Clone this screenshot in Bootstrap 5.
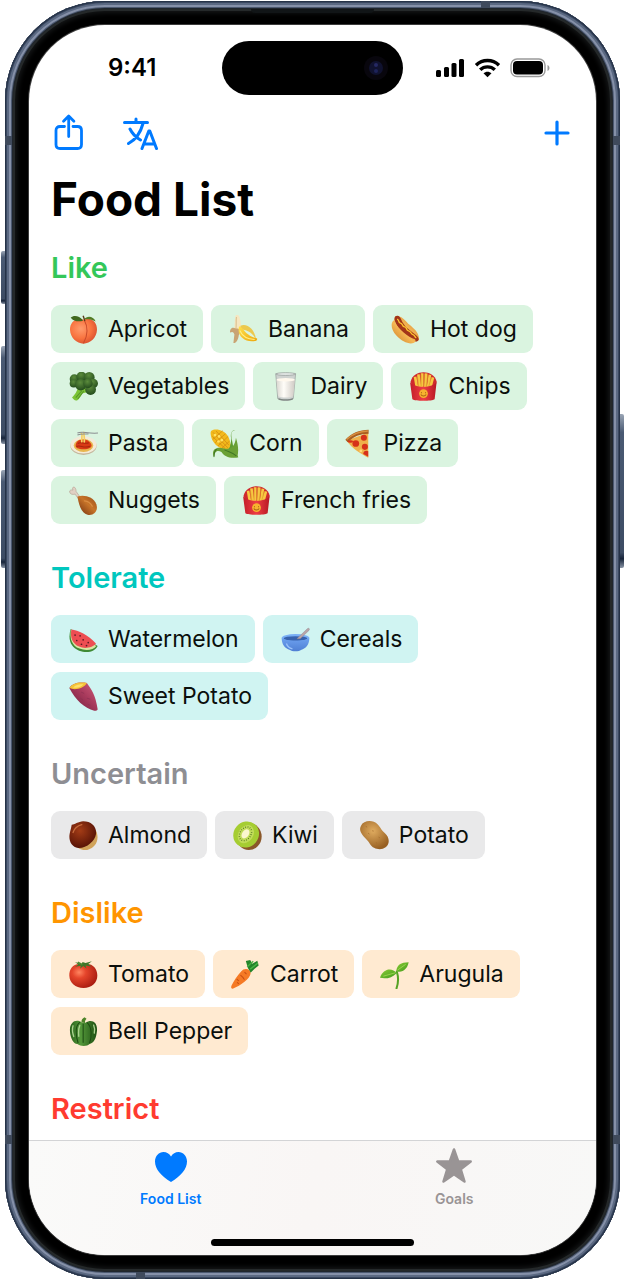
<!DOCTYPE html>
<html lang="en">
<head>
<meta charset="utf-8">
<meta name="viewport" content="width=device-width, initial-scale=1">
<title>Food List</title>
<link rel="stylesheet" href="https://cdn.jsdelivr.net/npm/bootstrap@5.3.0/dist/css/bootstrap.min.css">
<script src="https://cdn.jsdelivr.net/npm/bootstrap@5.3.0/dist/js/bootstrap.bundle.min.js"></script>
<style>
  body { font-family: Inter, "Liberation Sans", sans-serif; background: #fff; color: #000; }
  .stage { padding: 1px 5px; }
  .phone {
    padding: 24px; border-radius: 100px; background: #000;
    box-shadow: inset 0 0 0 1px #253247, inset 0 0 0 2px #3a4860, inset 0 0 0 4px #5b6982,
      inset 0 0 0 6px #8590a8, inset 0 0 0 7px #4b586f, inset 0 0 0 8px #20262d,
      inset 0 0 0 10px #25292a, inset 0 0 5px 12px #151718;
  }
  .screen { border-radius: 76px; background: #fff; box-shadow: 0 0 0 1px #3c3c3c; }
  .side-key { width: 4px; background: linear-gradient(#9aa5b5, #4a5a73 12%, #3d4c64 90%, #17243a 94%, #8a95a6); border-radius: 2px 0 0 2px; }
  .side-key.right { border-radius: 0 2px 2px 0; right: -4px; }
  .side-key.left { left: -4px; }
  .key-action { top: 250px; height: 53px; }
  .key-up { top: 345px; height: 98px; }
  .key-down { top: 469px; height: 98px; }
  .key-power { top: 413px; height: 154px; }
  .band { background: #3f4a5c; }
  .band-side { width: 7px; height: 9px; }
  .band-edge { width: 9px; height: 7px; }
  .band-upper { top: 135px; }
  .band-lower { bottom: 135px; }
  .band-left { left: 0; }
  .band-right { right: 0; }
  .band-top { top: 0; right: 130px; }
  .band-bottom { bottom: 0; left: 131px; }
  .earpiece { top: 8px; left: 40%; right: 40%; height: 4px; background: #111517; border-radius: 0 0 4px 4px; }

  .status { padding: 16px 46px 0 79px; }
  .status time { font-size: 24px; line-height: 54px; font-weight: 600; }
  .island { width: 181px; height: 54px; border-radius: 27px; background: #000; left: 50%; margin-left: -91px; padding-right: 14px; }
  .tools { padding: 17px 25px 0 24px; height: 59px; }
  .tools button { color: #007aff; line-height: 0; }
  .tools button + button { margin-left: 36px; }
  .content { padding: 0 22px 13px; }
  h1 { font-size: 46px; line-height: 60px; font-weight: 700; margin: 15px 0 21px; }
  section + section { margin-top: 36px; }
  h2 { font-size: 29px; line-height: 36px; font-weight: 600; margin: 0 0 19px; }
  .chips { gap: 9px 8px; }
  .chip { height: 48px; padding: 0 16px 0 18px; gap: 10px; border: 0; border-radius: 9px; font-size: 23px; line-height: 28px; color: #0b0f0c; background: var(--tint); }
  .chip svg { width: 29px; height: 29px; }
  .like { --tint: #daf4e0; } .like h2 { color: #34c759; }
  .tolerate { --tint: #d0f4f2; } .tolerate h2 { color: #00c7be; }
  .uncertain { --tint: #e9e9ea; } .uncertain h2 { color: #8e8e93; }
  .dislike { --tint: #ffead1; } .dislike h2 { color: #ff9500; }
  .restrict h2 { color: #ff3b30; }
  .tabs { border-top: 1px solid #d3d4d6; background: linear-gradient(100deg, #fafaf9, #f9f6f5 50%, #f8f8f7); }
  .tabs a { padding-top: 5px; font-size: 14px; line-height: 18px; font-weight: 600; color: #999495; }
  .tabs a.active { color: #007aff; }
  .tabs svg { margin-bottom: 2px; }
  .home-bar { width: 203px; height: 7px; border-radius: 4px; background: #000; margin: 31px auto 9px; }
</style>
</head>
<body>

<svg width="0" height="0" class="position-absolute" aria-hidden="true">
  <defs>
    <radialGradient id="gPeach" cx=".4" cy=".4" r=".65"><stop offset="0" stop-color="#ff9c6d"/><stop offset=".6" stop-color="#f8733f"/><stop offset="1" stop-color="#d9502f"/></radialGradient>
    <radialGradient id="gBroc" cx=".45" cy=".3" r=".7"><stop offset="0" stop-color="#5b8b3c"/><stop offset="1" stop-color="#234c1c"/></radialGradient>
    <linearGradient id="gMilk"><stop offset="0" stop-color="#d9d6d0"/><stop offset=".4" stop-color="#fffdf8"/><stop offset="1" stop-color="#cfcac4"/></linearGradient>
    <linearGradient id="gBun" x1="0" y1="1" x2="1" y2="0"><stop offset="0" stop-color="#c77721"/><stop offset=".5" stop-color="#f6b955"/><stop offset="1" stop-color="#c9772a"/></linearGradient>
    <linearGradient id="gBox"><stop offset="0" stop-color="#c31e29"/><stop offset=".5" stop-color="#ee3d44"/><stop offset="1" stop-color="#b71824"/></linearGradient>
    <linearGradient id="gYellow" x1="0" y1="0" x2="1" y2="1"><stop offset="0" stop-color="#ffe04d"/><stop offset="1" stop-color="#eda70c"/></linearGradient>
    <linearGradient id="gMeat" x1="1" y1="0" x2="0" y2="1"><stop offset="0" stop-color="#9a4c17"/><stop offset=".45" stop-color="#c77429"/><stop offset="1" stop-color="#6e2c0d"/></linearGradient>
    <linearGradient id="gBowl" x1="0" y1="0" x2="0" y2="1"><stop offset="0" stop-color="#6ea2f0"/><stop offset="1" stop-color="#4f7fd4"/></linearGradient>
    <linearGradient id="gYam" x1="0" y1="1" x2="1" y2="0"><stop offset="0" stop-color="#6a1a3a"/><stop offset=".55" stop-color="#a83a5c"/><stop offset="1" stop-color="#d2607c"/></linearGradient>
    <radialGradient id="gNut" cx=".4" cy=".35" r=".7"><stop offset="0" stop-color="#a33c16"/><stop offset="1" stop-color="#521005"/></radialGradient>
    <radialGradient id="gSpud" cx=".45" cy=".35" r=".65"><stop offset="0" stop-color="#e0ac60"/><stop offset="1" stop-color="#986022"/></radialGradient>
    <radialGradient id="gTomato" cx=".35" cy=".35" r=".7"><stop offset="0" stop-color="#ff8560"/><stop offset=".35" stop-color="#e5452b"/><stop offset="1" stop-color="#a91c10"/></radialGradient>
    <linearGradient id="gLeaf" x1="0" y1="0" x2="1" y2="1"><stop offset="0" stop-color="#8ccb35"/><stop offset="1" stop-color="#3e9a1d"/></linearGradient>
    <linearGradient id="gPepper"><stop offset="0" stop-color="#2a621b"/><stop offset=".4" stop-color="#54983a"/><stop offset="1" stop-color="#1e5013"/></linearGradient>
  </defs>

  <symbol id="peach" viewBox="0 0 86 86">
    <path d="M43 14C22 4 2 22 3 44c1 24 20 41 40 41s39-17 40-41C84 22 66 4 43 14z" fill="url(#gPeach)"/>
    <path d="M45 14c12 22 10 48-2 70" fill="none" stroke="#c94a2b" stroke-width="3"/>
    <path d="M42 16C30 2 14 0 5 8c8 10 25 14 37 8z" fill="#40691e"/><path d="M44 13c10-12 28-10 35 6-14-8-24-7-35-6z" fill="#537b25"/>
    <path d="M42 2l5 16" stroke="#5a3b1a" stroke-width="4"/>
  </symbol>
  <symbol id="broccoli" viewBox="0 0 86 86">
    <path d="M28 36l30 14c4 12-14 10-18 14-6 8-8 14-15 20-7 3-12-3-16-9 8-8 16-16 19-39z" fill="#7cc436"/><path d="M38 56L20 76m24-20L26 80" stroke="#57982a" stroke-width="3"/>
    <g fill="url(#gBroc)"><circle cx="16" cy="21" r="14"/><circle cx="37" cy="14" r="15"/><circle cx="60" cy="16" r="16"/><circle cx="72" cy="34" r="14"/><circle cx="14" cy="34" r="12"/><circle cx="64" cy="52" r="16"/><circle cx="35" cy="38" r="17"/><circle cx="56" cy="34" r="14"/></g>
  </symbol>
  <symbol id="banana" viewBox="0 0 86 86">
    <path d="M19 3c2-6 10-4 12 2 5 20 6 34 1 48L14 44c4-14 2-26 5-41z" fill="#f6e6c0"/><path d="M22 6c-2 14 1 24-2 38" stroke="#d9be8d" stroke-width="3" fill="none"/>
    <path d="M20 40C6 34 3 44 3 52c8-4 11-1 13 6l-3 25c7 2 14-8 16-23l5-15c-4-4-9-6-14-5z" fill="#c9a473"/>
    <path d="M34 32c18-8 42 8 46 40-10-18-22-28-46-30z" fill="#ecc94f"/><path d="M30 34c12 0 16 26 50 34 6 1 4 6 1 8-30 8-60-12-51-42z" fill="url(#gYellow)"/><path d="M32 46c8 18 24 26 44 27" fill="none" stroke="#fff08a" stroke-width="3"/>
  </symbol>
  <symbol id="milk" viewBox="0 0 86 86">
    <path d="M14 5h59l-7 74c-6 7-40 7-46 0z" fill="#ced2d0" stroke="#939b98" stroke-width="2"/><path d="M16 23h55l-5 49c-8 5-37 5-45 0z" fill="url(#gMilk)"/><ellipse cx="43.500" cy="23" rx="27" ry="5" fill="#fff8ed"/><ellipse cx="43.500" cy="6" rx="29" ry="4" fill="#e7ebe9" stroke="#8d9592" stroke-width="2"/><path d="M22 77c8 5 35 5 43 0l-1 5c-8 3-33 3-41 0z" fill="#7d8581"/>
  </symbol>
  <symbol id="hotdog" viewBox="0 0 86 86">
    <path d="M18 2c20 4 26 18 37 27 9 8 29 22 28 42-1 6-10 9-18 6L10 16C9 8 12 3 18 2z" fill="url(#gBun)"/>
    <path d="M13 4c8-6 15 2 18 11 6 16 22 29 37 40 9 6 20 16 11 22-6 5-16-1-24-7C37 57 22 43 14 25 11 18 8 10 13 4z" fill="#a23519"/>
    <path d="M8 16C-2 23 0 44 16 61c16 18 38 27 51 22 6-3 7-7 4-11-20-7-50-31-58-50-1-4-2-7-5-6z" fill="url(#gBun)"/>
    <path d="M18 12c8 2 2 11 10 12s4 11 12 11 4 11 12 12 6 10 13 11 4 8 10 10" fill="none" stroke="#ffc72e" stroke-width="4"/>
  </symbol>
  <symbol id="fries" viewBox="0 0 86 86">
    <path d="M5 28C14-8 72-8 82 28L76 54H10z" fill="#d02a2d"/>
    <g stroke="#f7c842" stroke-width="8"><path d="M18 14l6 36M28 7l4 43M39 4v46M51 4l-3 46M62 8l-6 42M71 16l-9 34"/></g><g stroke="#dd9825" stroke-width="2"><path d="M25 14l4 28M36 7v35M46 5l-2 37M56 8l-5 34M66 15l-7 27"/></g>
    <path d="M3 29c9 20 70 20 79 0l-6 52c-8 6-58 6-66 0z" fill="url(#gBox)"/><circle cx="43" cy="64" r="13" fill="#f7b22f"/><path d="M37 60v3m12-3v3M35 67c4 6 12 6 16 0" stroke="#a66214" stroke-width="3" fill="none"/>
  </symbol>
  <symbol id="pasta" viewBox="0 0 86 86">
    <ellipse cx="43" cy="50" rx="39" ry="27" fill="#c4b59b"/><ellipse cx="43" cy="47" rx="39" ry="26" fill="#f3ead8"/><ellipse cx="43" cy="49" rx="29" ry="19" fill="#e8b64d"/><path d="M20 46c4-12 10-13 16-14 14-4 26 4 30 13 5 10-8 15-23 15S17 56 20 46z" fill="#d93a15"/><path d="M22 52c12-6 22 7 40-1M26 43c10-6 20 3 33-2" stroke="#a9260d" stroke-width="3" fill="none"/>
    <path d="M38 40c-2-13 4-20-2-30m9 30c3-16-3-20 0-32" stroke="#f3d064" stroke-width="5" fill="none"/><path d="M25 12c15-8 27 3 61 0M25 18c14-6 26-1 33-4" stroke="#8b8e91" stroke-width="3" fill="none"/>
  </symbol>
  <symbol id="corn" viewBox="0 0 86 86">
    <path d="M75 4c-20 2-9 28-7 44 2 9 5 14 16 36-13 3-28-3-35-12 0-10 18-28 13-48C61 12 65 2 75 4z" fill="#5d9b30"/>
    <path d="M4 5c12-8 38-3 49 16 9 16 10 35 0 38C38 65 13 50 5 28 2 19 0 9 4 5z" fill="#f2b91c"/><path d="M9 10l44 46M18 6l38 42M7 22l38 36M8 31l30-26M15 41L46 14M24 50l30-28M36 56l22-20" stroke="#ce8610" stroke-width="2"/><g fill="#ffe264"><circle cx="15" cy="18" r="4"/><circle cx="27" cy="22" r="4"/><circle cx="35" cy="33" r="4"/><circle cx="25" cy="37" r="4"/></g>
    <path d="M42 58c17 3 31-2 35-32 6 20 9 36 4 58-20 4-39-2-47-16C20 61 13 68 12 85 2 63 17 49 42 58z" fill="#6aa035"/><path d="M43 62c12 6 25 8 35 18M20 60c-8 4-8 14-8 22" stroke="#3f7525" stroke-width="3" fill="none"/>
  </symbol>
  <symbol id="pizza" viewBox="0 0 86 86">
    <path d="M5 34L69 11v74C51 76 20 58 5 34z" fill="#f0b04a"/><path d="M1 32C18 12 43 2 70 2v12C45 14 26 22 8 39z" fill="#a95e21"/><path d="M5 31C22 15 44 7 68 6" stroke="#d99040" stroke-width="4" fill="none"/><g fill="#d6311a"><circle cx="32" cy="43" r="10"/><circle cx="56" cy="26" r="9"/><circle cx="59" cy="53" r="9"/><path d="M69 66v16l-15-8c0-8 8-12 15-8z"/><ellipse cx="16" cy="37" rx="8" ry="4"/></g><circle cx="47" cy="65" r="4" fill="#ffda79"/>
  </symbol>
  <symbol id="drumstick" viewBox="0 0 86 86">
    <path d="M38 40L21 16c0-8-4-15-9-12-3 2-1 6 0 8-6-1-11 0-10 6 1 7 10 8 16 6l14 20z" fill="#e0d0c3" stroke="#b7a393" stroke-width="2"/><path d="M25 31c22-6 48 2 56 23 7 20-8 35-26 31C36 80 30 58 25 31z" fill="url(#gMeat)"/><path d="M46 44c12 1 19 8 23 16" stroke="#d98d42" stroke-width="4" stroke-linecap="round" fill="none"/>
  </symbol>
  <symbol id="melon" viewBox="0 0 86 86">
    <path d="M5 12C-4 42 4 66 30 76c24 9 48 2 55-14z" fill="#3f8a35"/><path d="M6 13c-5 26 2 48 25 57 20 8 42 4 50-8z" fill="#d9e4a2"/><path d="M7 13c20 2 50 16 73 42C72 67 46 72 30 64 10 55 3 37 7 13z" fill="#ed4e52"/><g fill="#5a1c23"><circle cx="18" cy="30" r="2.500"/><circle cx="33" cy="32" r="2.500"/><circle cx="23" cy="46" r="2.500"/><circle cx="42" cy="44" r="2.500"/><circle cx="37" cy="57" r="2.500"/><circle cx="57" cy="52" r="2.500"/><circle cx="52" cy="61" r="2.500"/></g>
  </symbol>
  <symbol id="bowl" viewBox="0 0 86 86">
    <ellipse cx="43" cy="38" rx="41" ry="11" fill="#79aef5"/><ellipse cx="43" cy="40" rx="35" ry="7" fill="#3762ae"/><path d="M47 41l30-29c4-5 10-1 6 4L57 41z" fill="#b7a4a8" stroke="#8c7c84" stroke-width="1"/><path d="M2 38c12 12 70 12 82 0 0 20-9 32-25 36-4 5-28 5-32 0C11 70 2 58 2 38z" fill="url(#gBowl)"/><path d="M16 55c3 9 10 14 18 16" stroke="#9bc2fa" stroke-width="4" fill="none"/>
  </symbol>
  <symbol id="yam" viewBox="0 0 86 86">
    <path d="M1 18C9 4 30-1 53 3c12 17 26 34 32 78-1 4-5 5-10 4C46 78 19 54 1 18z" fill="url(#gYam)"/><path d="M2 18C7 4 32-1 53 3 46 18 17 26 2 18z" fill="#f4c338"/><path d="M12 16c8-8 20-9 31-9-8 8-18 12-31 9z" fill="#ffe06b"/><path d="M36 30l9 4m8 14l10 3M34 48l8 6m13 12l8 3" stroke="#8a3050" stroke-width="2"/>
  </symbol>
  <symbol id="chestnut" viewBox="0 0 86 86">
    <path d="M79 26c12 24 5 52-25 60-10 2-24-2-28-8z" fill="#d1a35a"/><path d="M8 11C14 12 27 2 42 1c25 0 41 17 38 38C77 59 51 82 27 80 8 78-2 59 2 38 4 28 7 18 8 11z" fill="url(#gNut)"/><path d="M12 34c4-12 14-20 26-23" stroke="#c76b3c" stroke-width="4" stroke-linecap="round" fill="none"/>
  </symbol>
  <symbol id="kiwi" viewBox="0 0 86 86">
    <ellipse cx="47" cy="46" rx="38" ry="40" fill="#8a5729"/><ellipse cx="39" cy="40" rx="40" ry="37" transform="rotate(-50 39 40)" fill="#a5cd32"/><ellipse cx="38" cy="39" rx="29" ry="22" transform="rotate(-55 38 39)" fill="#c0dc58"/><ellipse cx="37" cy="38" rx="22" ry="16" transform="rotate(-55 37 38)" fill="none" stroke="#456620" stroke-width="4" stroke-dasharray="2 5"/><ellipse cx="37" cy="38" rx="15" ry="10" transform="rotate(-55 37 38)" fill="#fbf7cf"/>
  </symbol>
  <symbol id="potato" viewBox="0 0 86 86">
    <path d="M3 14C11-3 39-4 52 10c10 11 11 17 22 26 13 11 16 31 2 42-14 11-38 5-46-9-7-13-14-16-22-27C0 32-2 23 3 14z" fill="url(#gSpud)"/><path d="M17 16l4 2m15 11l5 1M24 36l4 3m27 9l4 2m-12 14l4 2" stroke="#a06a2a" stroke-width="2"/>
  </symbol>
  <symbol id="tomato" viewBox="0 0 86 86">
    <path d="M33 12C13 10 0 27 1 47c1 22 18 36 42 36s41-15 41-37C84 24 69 9 48 12z" fill="url(#gTomato)"/><path d="M38 12L17 6c6 4 8 5 10 8l-9 6 17-3-2 9 9-8 10 7-3-9 18 3-10-7 11-8-19 5-9-3z" fill="#3f772a"/><path d="M40 14L26 7" stroke="#4d8830" stroke-width="5"/>
  </symbol>
  <symbol id="carrot" viewBox="0 0 86 86">
    <path d="M50 24L44 3l13-3 6 11 15-9 4 14-12 10-12 12z" fill="#23852b"/><path d="M48 20L66 4m-9 23L80 9" stroke="#48b244" stroke-width="4"/><path d="M30 34c9-12 29-9 28 7-2 14-28 35-53 44-6 0-5-6-3-10 6-13 17-29 28-41z" fill="#f57a25"/><path d="M40 36l6 6M28 45l9 8M17 57l6 5m17-4l-5-6M23 71l-5-5" stroke="#c84e12" stroke-width="3"/>
  </symbol>
  <symbol id="seedling" viewBox="0 0 86 86">
    <path d="M49 84c7-20 5-36 1-49" stroke="#55a224" stroke-width="6" stroke-linecap="round" fill="none"/><path d="M48 33c3-19 13-25 37-26-4 21-20 33-37 26z" fill="url(#gLeaf)"/><path d="M49 39C37 22 9 24 0 53c18 4 36 0 49-14z" fill="url(#gLeaf)"/><path d="M52 30L76 13M10 48l35-10" stroke="#b5e360" stroke-width="2"/>
  </symbol>
  <symbol id="pepper" viewBox="0 0 86 86">
    <path d="M37 16C36 9 40 4 46 1l6 4c-5 5-5 8-4 13z" fill="#4c8429"/><path d="M39 17C22 3 0 15 3 43c1 20 11 38 22 37 9 8 30 7 36 0 11-1 20-15 22-39C85 12 65 6 49 17z" fill="url(#gPepper)"/><path d="M33 15C15 26 22 62 27 77M53 16c17 15 14 44 8 61M42 20v56" stroke="#1d4b12" stroke-width="3" fill="none"/><path d="M12 26c-4 12-1 23 2 32M32 25c-5 12-4 22-3 32M73 24c3 7 4 15 2 24" stroke="#a9d18e" stroke-width="4" stroke-linecap="round" fill="none"/>
  </symbol>
</svg>

<div class="stage min-vh-100 d-flex">
  <div class="phone position-relative d-flex flex-grow-1">
    <span class="side-key left key-action position-absolute"></span>
    <span class="side-key left key-up position-absolute"></span>
    <span class="side-key left key-down position-absolute"></span>
    <span class="side-key right key-power position-absolute"></span>
    <span class="band band-side band-upper band-left position-absolute"></span>
    <span class="band band-side band-upper band-right position-absolute"></span>
    <span class="band band-side band-lower band-left position-absolute"></span>
    <span class="band band-side band-lower band-right position-absolute"></span>
    <span class="band band-edge band-top position-absolute"></span>
    <span class="band band-edge band-bottom position-absolute"></span>
    <span class="earpiece position-absolute"></span>

    <div class="screen d-flex flex-column flex-grow-1 overflow-hidden">
      <header>
        <div class="status position-relative d-flex align-items-center justify-content-between">
          <time>9:41</time>
          <div class="island position-absolute d-flex align-items-center justify-content-end">
            <svg width="26" height="26" viewBox="0 0 26 26" aria-hidden="true"><circle cx="13" cy="13" r="12" fill="#08060d"/><circle cx="13" cy="13" r="7" fill="#10122f"/><circle cx="13" cy="10" r="2" fill="#252963"/><circle cx="13" cy="16" r="2" fill="#1d2359"/></svg>
          </div>
          <svg width="114" height="20" viewBox="0 0 114 20" role="img" aria-label="Signal, Wi-Fi and battery">
            <g><rect x="0" y="12" width="5" height="7" rx="1.500"/><rect x="8" y="9" width="5" height="10" rx="1.500"/><rect x="15.500" y="5" width="5" height="14" rx="1.500"/><rect x="23" y="1" width="5" height="18" rx="1.500"/></g>
            <g fill="none" stroke="#000" stroke-width="3.400"><path d="M40 7.200c6.500-6.200 16.500-6.200 23 0M44.200 11.800c4-3.900 10.600-3.900 14.600 0"/></g><path d="M47.500 15.300c2.200-2.200 5.800-2.200 8 0l-4 4z"/>
            <rect x="75" y="1" width="34" height="17.500" rx="6" fill="none" stroke="#999" stroke-width="1.400"/><rect x="77" y="3" width="30" height="13.500" rx="4"/><path d="M111.500 7v6c2.600-1 2.600-5 0-6z" fill="#999"/>
          </svg>
        </div>
        <div class="tools d-flex align-items-start">
          <button type="button" class="btn p-0 border-0" aria-label="Share">
            <svg width="32" height="38" viewBox="0 0 32 38" fill="none" stroke="currentColor" stroke-width="2.800" stroke-linecap="round" stroke-linejoin="round"><path d="M11.500 14.500H7c-2.500 0-4 1.500-4 4v14c0 2.500 1.500 4 4 4h17.500c2.500 0 4-1.500 4-4v-14c0-2.500-1.500-4-4-4H20M15.700 24.500V4.500M10.500 9.300l5.200-5.200 5.200 5.200"/></svg>
          </button>
          <button type="button" class="btn p-0 border-0" aria-label="Translate">
            <svg width="38" height="38" viewBox="0 0 38 38" fill="none" stroke="currentColor" stroke-width="3" stroke-linecap="round" stroke-linejoin="round"><path d="M3.500 10.400h23M15 7v3M9 17c3 6 7 9 10.500 11M22 11.500C19.500 21 14 28 7.500 31.500M21 36.500l6.800-17.500h1L35.500 36.500M23.500 32h10"/></svg>
          </button>
          <button type="button" class="btn p-0 border-0 ms-auto" aria-label="Add food">
            <svg width="28" height="40" viewBox="0 0 28 40" fill="none" stroke="currentColor" stroke-width="3.200" stroke-linecap="round"><path d="M14 10v22M3 21h22"/></svg>
          </button>
        </div>
      </header>

      <main class="content flex-grow-1">
        <h1>Food List</h1>
        <section class="like">
          <h2>Like</h2>
          <div class="chips d-flex flex-wrap">
            <button type="button" class="chip d-flex align-items-center"><svg aria-hidden="true"><use href="#peach"/></svg>Apricot</button>
            <button type="button" class="chip d-flex align-items-center"><svg aria-hidden="true"><use href="#banana"/></svg>Banana</button>
            <button type="button" class="chip d-flex align-items-center"><svg aria-hidden="true"><use href="#hotdog"/></svg>Hot dog</button>
            <button type="button" class="chip d-flex align-items-center"><svg aria-hidden="true"><use href="#broccoli"/></svg>Vegetables</button>
            <button type="button" class="chip d-flex align-items-center"><svg aria-hidden="true"><use href="#milk"/></svg>Dairy</button>
            <button type="button" class="chip d-flex align-items-center"><svg aria-hidden="true"><use href="#fries"/></svg>Chips</button>
            <button type="button" class="chip d-flex align-items-center"><svg aria-hidden="true"><use href="#pasta"/></svg>Pasta</button>
            <button type="button" class="chip d-flex align-items-center"><svg aria-hidden="true"><use href="#corn"/></svg>Corn</button>
            <button type="button" class="chip d-flex align-items-center"><svg aria-hidden="true"><use href="#pizza"/></svg>Pizza</button>
            <button type="button" class="chip d-flex align-items-center"><svg aria-hidden="true"><use href="#drumstick"/></svg>Nuggets</button>
            <button type="button" class="chip d-flex align-items-center"><svg aria-hidden="true"><use href="#fries"/></svg>French fries</button>
          </div>
        </section>
        <section class="tolerate">
          <h2>Tolerate</h2>
          <div class="chips d-flex flex-wrap">
            <button type="button" class="chip d-flex align-items-center"><svg aria-hidden="true"><use href="#melon"/></svg>Watermelon</button>
            <button type="button" class="chip d-flex align-items-center"><svg aria-hidden="true"><use href="#bowl"/></svg>Cereals</button>
            <button type="button" class="chip d-flex align-items-center"><svg aria-hidden="true"><use href="#yam"/></svg>Sweet Potato</button>
          </div>
        </section>
        <section class="uncertain">
          <h2>Uncertain</h2>
          <div class="chips d-flex flex-wrap">
            <button type="button" class="chip d-flex align-items-center"><svg aria-hidden="true"><use href="#chestnut"/></svg>Almond</button>
            <button type="button" class="chip d-flex align-items-center"><svg aria-hidden="true"><use href="#kiwi"/></svg>Kiwi</button>
            <button type="button" class="chip d-flex align-items-center"><svg aria-hidden="true"><use href="#potato"/></svg>Potato</button>
          </div>
        </section>
        <section class="dislike">
          <h2>Dislike</h2>
          <div class="chips d-flex flex-wrap">
            <button type="button" class="chip d-flex align-items-center"><svg aria-hidden="true"><use href="#tomato"/></svg>Tomato</button>
            <button type="button" class="chip d-flex align-items-center"><svg aria-hidden="true"><use href="#carrot"/></svg>Carrot</button>
            <button type="button" class="chip d-flex align-items-center"><svg aria-hidden="true"><use href="#seedling"/></svg>Arugula</button>
            <button type="button" class="chip d-flex align-items-center"><svg aria-hidden="true"><use href="#pepper"/></svg>Bell Pepper</button>
          </div>
        </section>
        <section class="restrict"><h2 class="mb-0">Restrict</h2></section>
      </main>

      <footer class="tabs">
        <nav class="d-flex">
          <a href="#food" class="active flex-fill w-50 d-flex flex-column align-items-center text-decoration-none" aria-current="page">
            <svg width="38" height="42" viewBox="0 0 38 42" fill="currentColor" aria-hidden="true"><path d="M19 36C9 30 3 23 3 15.500 3 10 7 6 11.500 6c3.200 0 5.800 1.600 7.500 4.600C20.700 7.600 23.300 6 26.500 6 31 6 35 10 35 15.500 35 23 29 30 19 36z"/></svg>
            Food List
          </a>
          <a href="#goals" class="flex-fill w-50 d-flex flex-column align-items-center text-decoration-none">
            <svg width="38" height="42" viewBox="0 0 38 42" fill="currentColor" stroke="currentColor" stroke-width="2.500" stroke-linejoin="round" aria-hidden="true"><path d="M19 3.500l4.200 12h12.500l-10 7.700 3.800 12.300L19 28.200 8.500 35.500l3.800-12.300-10-7.700h12.500z"/></svg>
            Goals
          </a>
        </nav>
        <div class="home-bar"></div>
      </footer>
    </div>
  </div>
</div>
</body>
</html>
